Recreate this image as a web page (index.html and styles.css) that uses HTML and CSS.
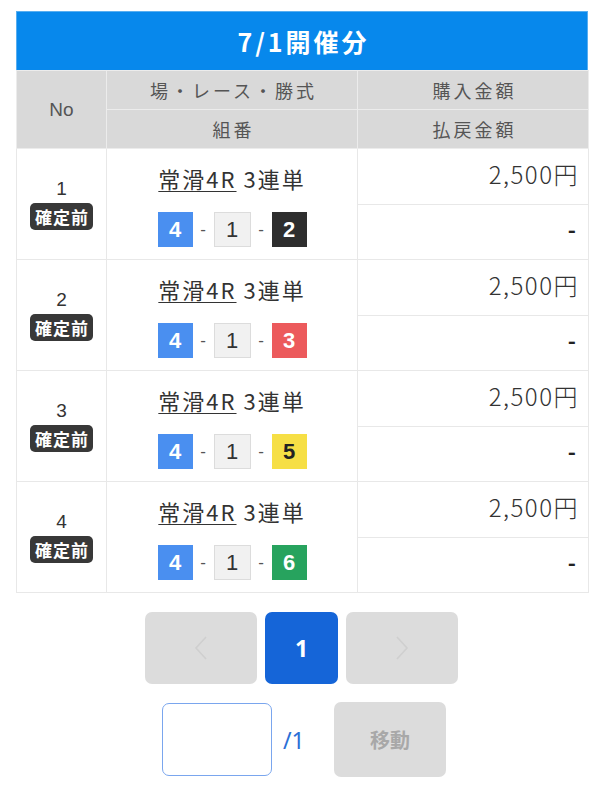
FILE: index.html
```html
<!DOCTYPE html>
<html lang="ja">
<head>
<meta charset="utf-8">
<link rel="stylesheet" href="styles.css">
</head>
<body>
<div class="page">
  <div class="caption">7/1開催分</div>
  <table class="bets">
    <colgroup><col class="c1"><col class="c2"><col class="c3"></colgroup>
    <thead>
      <tr><th rowspan="2" class="hno">No</th><th class="h">場・レース・勝式</th><th class="h">購入金額</th></tr>
      <tr><th class="h">組番</th><th class="h">払戻金額</th></tr>
    </thead>
    <tbody>
      <tr>
        <td rowspan="2" class="no"><div class="num">1</div><span class="badge">確定前</span></td>
        <td rowspan="2" class="race"><div class="name"><span class="u">常滑4R</span> 3連単</div><div class="combo"><span class="b b4">4</span><span class="dash">-</span><span class="b b1">1</span><span class="dash">-</span><span class="b b2">2</span></div></td>
        <td class="amt">2,500円</td>
      </tr>
      <tr><td class="pay">-</td></tr>
      <tr>
        <td rowspan="2" class="no"><div class="num">2</div><span class="badge">確定前</span></td>
        <td rowspan="2" class="race"><div class="name"><span class="u">常滑4R</span> 3連単</div><div class="combo"><span class="b b4">4</span><span class="dash">-</span><span class="b b1">1</span><span class="dash">-</span><span class="b b3">3</span></div></td>
        <td class="amt">2,500円</td>
      </tr>
      <tr><td class="pay">-</td></tr>
      <tr>
        <td rowspan="2" class="no"><div class="num">3</div><span class="badge">確定前</span></td>
        <td rowspan="2" class="race"><div class="name"><span class="u">常滑4R</span> 3連単</div><div class="combo"><span class="b b4">4</span><span class="dash">-</span><span class="b b1">1</span><span class="dash">-</span><span class="b b5">5</span></div></td>
        <td class="amt">2,500円</td>
      </tr>
      <tr><td class="pay">-</td></tr>
      <tr>
        <td rowspan="2" class="no"><div class="num">4</div><span class="badge">確定前</span></td>
        <td rowspan="2" class="race"><div class="name"><span class="u">常滑4R</span> 3連単</div><div class="combo"><span class="b b4">4</span><span class="dash">-</span><span class="b b1">1</span><span class="dash">-</span><span class="b b6">6</span></div></td>
        <td class="amt">2,500円</td>
      </tr>
      <tr><td class="pay">-</td></tr>
    </tbody>
  </table>

  <div class="pager">
    <button class="pbtn nav"><svg width="14" height="26" viewBox="0 0 14 26"><path d="M12 2 L2 13 L12 24" fill="none" stroke="#cfcfcf" stroke-width="1.6"/></svg></button>
    <button class="pbtn cur">1</button>
    <button class="pbtn nav"><svg width="14" height="26" viewBox="0 0 14 26"><path d="M2 2 L12 13 L2 24" fill="none" stroke="#cfcfcf" stroke-width="1.6"/></svg></button>
  </div>
  <div class="jump">
    <input class="pinput" type="text">
    <span class="total">/1</span>
    <button class="move">移動</button>
  </div>
</div>
</body>
</html>
```
FILE: styles.css
```css
* { box-sizing: border-box; }
body {
  margin: 0;
  background: #fff;
  font-family: "Noto Sans CJK JP", "Noto Sans", sans-serif;
  color: #333;
}
.page {
  padding: 11px 17px 0 16px;
}
.caption {
  background: #0788ec;
  color: #fff;
  font-weight: bold;
  font-size: 25px;
  letter-spacing: 3px;
  text-indent: 3px;
  height: 59px;
  line-height: 59px;
  text-align: center;
  border: 1px solid #58aef0;
  border-bottom: none;
}
.bets {
  width: 572px;
  border-collapse: collapse;
  table-layout: fixed;
}
.c1 { width: 90px; }
.c2 { width: 251px; }
.c3 { width: 231px; }
.bets th, .bets td {
  border: 1px solid #e8e8e8;
  padding: 0;
}
.bets th {
  background: #d9d9d9;
  color: #555;
  font-weight: normal;
  font-size: 18px;
  letter-spacing: 3px;
  text-indent: 3px;
  text-align: center;
  border-color: #ececec;
}
.bets th.h { height: 39px; }
.hno {
  font-size: 19px !important;
  letter-spacing: 0 !important;
  text-indent: 0 !important;
  font-family: "Liberation Sans", sans-serif;
}
.no {
  text-align: center;
  vertical-align: middle;
}
.num {
  font-size: 19px;
  line-height: 22px;
  color: #333;
  margin-bottom: 3px;
  font-family: "Liberation Sans", sans-serif;
}
.badge {
  display: inline-block;
  background: #383838;
  color: #fff;
  font-size: 17px;
  font-weight: bold;
  line-height: 27px;
  height: 27px;
  padding: 0 4px 0 5px;
  border-radius: 5px;
  letter-spacing: 1px;
}
.race {
  vertical-align: top;
  text-align: center;
}
.name {
  height: 55px;
  padding-top: 15px;
  font-size: 22px;
  line-height: 28px;
  letter-spacing: 2px;
  color: #333;
}
.u { text-decoration: underline; text-underline-offset: 3px; text-decoration-thickness: 1px; }
.combo {
  height: 55px;
  display: flex;
  align-items: center;
  justify-content: center;
  padding-bottom: 4px;
}
.b {
  width: 35px;
  height: 35px;
  display: inline-flex;
  align-items: center;
  justify-content: center;
  font-size: 22px;
  font-weight: bold;
  font-family: "Liberation Sans", "Noto Sans", sans-serif;
  color: #fff;
}
.dash {
  width: 21px;
  text-align: center;
  font-size: 17px;
  color: #555;
  font-family: "Liberation Sans", sans-serif;
}
.b4 { background: #4a8ff0; }
.b1 { width: 37px; background: #f1f1f1; border: 1px solid #dcdcdc; color: #333; font-weight: normal; }
.b2 { background: #2e2e2e; }
.b3 { background: #ec5a5c; }
.b5 { background: #f6df45; color: #222; }
.b6 { background: #27a35e; }
.amt, .pay {
  text-align: right;
  height: 55px;
}
.amt {
  font-size: 24px;
  letter-spacing: 1.5px;
  color: #333;
  vertical-align: middle;
  padding-bottom: 6px !important;
  padding-right: 9px !important;
  font-weight: 300;
}
.pay {
  font-size: 22px;
  font-weight: bold;
  color: #222;
  vertical-align: middle;
  padding-bottom: 8px !important;
  padding-right: 12px !important;
}
.pager {
  margin-top: 19px;
  display: flex;
  justify-content: center;
  gap: 8px;
  padding-right: 1px;
}
.pbtn {
  height: 72px;
  border: none;
  border-radius: 7px;
  display: flex;
  align-items: center;
  justify-content: center;
  font-family: "Noto Sans", sans-serif;
}
.nav { width: 112px; background: #dcdcdc; }
.cur {
  width: 73px;
  background: #1565d8;
  color: #fff;
  font-size: 23px;
  font-weight: bold;
}
.jump {
  margin-top: 18px;
  display: flex;
  align-items: center;
  padding-left: 146px;
}
.pinput {
  width: 110px;
  height: 73px;
  border: 1.5px solid #7aa6ee;
  border-radius: 7px;
  background: #fff;
  outline: none;
}
.total {
  margin-left: 11px;
  font-size: 23px;
  color: #2b6fd6;
  font-family: "Noto Sans", sans-serif;
  width: 51px;
}
.move {
  width: 112px;
  height: 75px;
  border: none;
  border-radius: 7px;
  background: #dcdcdc;
  color: #a8a8a8;
  font-size: 20px;
  font-weight: bold;
  font-family: "Noto Sans CJK JP", sans-serif;
}
```
